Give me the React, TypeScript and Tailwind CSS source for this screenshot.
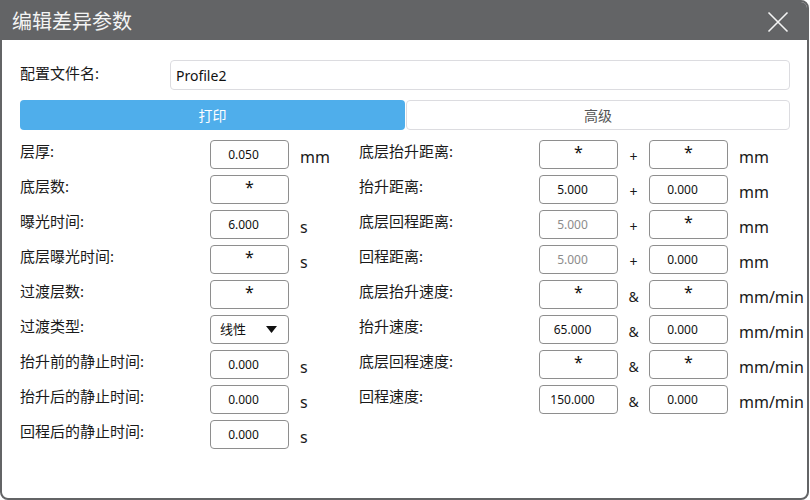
import React from "react";

const font = { fontFamily: '"Noto Sans", "Noto Sans CJK SC", sans-serif' };

type Cell = { v: string; dim?: boolean };

const leftRows: { label: string; cell: Cell | "select"; unit?: string }[] = [
  { label: "层厚:", cell: { v: "0.050" }, unit: "mm" },
  { label: "底层数:", cell: { v: "*" } },
  { label: "曝光时间:", cell: { v: "6.000" }, unit: "s" },
  { label: "底层曝光时间:", cell: { v: "*" }, unit: "s" },
  { label: "过渡层数:", cell: { v: "*" } },
  { label: "过渡类型:", cell: "select" },
  { label: "抬升前的静止时间:", cell: { v: "0.000" }, unit: "s" },
  { label: "抬升后的静止时间:", cell: { v: "0.000" }, unit: "s" },
  { label: "回程后的静止时间:", cell: { v: "0.000" }, unit: "s" },
];

const rightRows: { label: string; a: Cell; op: string; b: Cell; unit: string }[] = [
  { label: "底层抬升距离:", a: { v: "*" }, op: "+", b: { v: "*" }, unit: "mm" },
  { label: "抬升距离:", a: { v: "5.000" }, op: "+", b: { v: "0.000" }, unit: "mm" },
  { label: "底层回程距离:", a: { v: "5.000", dim: true }, op: "+", b: { v: "*" }, unit: "mm" },
  { label: "回程距离:", a: { v: "5.000", dim: true }, op: "+", b: { v: "0.000" }, unit: "mm" },
  { label: "底层抬升速度:", a: { v: "*" }, op: "&", b: { v: "*" }, unit: "mm/min" },
  { label: "抬升速度:", a: { v: "65.000" }, op: "&", b: { v: "0.000" }, unit: "mm/min" },
  { label: "底层回程速度:", a: { v: "*" }, op: "&", b: { v: "*" }, unit: "mm/min" },
  { label: "回程速度:", a: { v: "150.000" }, op: "&", b: { v: "0.000" }, unit: "mm/min" },
];

const Box = ({ cell }: { cell: Cell }) => (
  <div className="w-[79px] h-[29px] shrink-0 rounded-[4px] border border-[#8e8e8e] bg-white flex items-center justify-center">
    {cell.v === "*" ? (
      <span className="text-[16px] text-[#111] mb-[6px]">*</span>
    ) : (
      <span className={`text-[12px] pr-[12px] ${cell.dim ? "text-[#8c8c8c]" : "text-[#111]"}`}>{cell.v}</span>
    )}
  </div>
);

const Label = ({ children, w }: { children: React.ReactNode; w: string }) => (
  <div className={`${w} shrink-0 mb-[6px] text-[15px] text-[#1a1a1a] whitespace-nowrap`}>{children}</div>
);

const Unit = ({ children }: { children?: React.ReactNode }) => (
  <div className="ml-[11px] mt-[5px] text-[16px] text-[#1a1a1a] whitespace-nowrap">{children}</div>
);

export default function App() {
  return (
    <div className="w-[810px] h-[500px] bg-white" style={font}>
      <div className="w-[809px] h-[500px] flex flex-col border-2 border-[#636466] rounded-tr-[8px] rounded-b-[8px] overflow-hidden bg-white">
        <div className="h-[38px] shrink-0 bg-[#636466] flex items-center justify-between pl-[10px] pr-[18px]">
          <span className="text-[20px] text-[#f4f4f4] leading-none mt-[2px]">编辑差异参数</span>
          <svg width="22" height="22" viewBox="0 0 22 22" className="mt-[1px]">
            <path d="M1.5 1.5 L20.5 20.5 M20.5 1.5 L1.5 20.5" stroke="#f4f4f4" strokeWidth="1.6" />
          </svg>
        </div>

        <div className="flex flex-col pl-[18px] pr-[17px] pt-[20px]">
          <div className="flex items-center">
            <div className="w-[150px] shrink-0 mb-[4px] text-[15px] text-[#1a1a1a]">配置文件名:</div>
            <div className="flex-1 h-[30px] rounded-[4px] border border-[#dcdce0] flex items-center pl-[5px] text-[14px] text-[#111]">
              Profile2
            </div>
          </div>

          <div className="flex mt-[10px] h-[30px]">
            <div className="w-[385px] rounded-[4px] bg-[#4faeeb] flex items-center justify-center text-[14px] text-white">
              打印
            </div>
            <div className="flex-1 ml-px rounded-[4px] border border-[#dcdce0] flex items-center justify-center text-[14px] text-[#555]">
              高级
            </div>
          </div>

          <div className="grid grid-cols-[339px_1fr] mt-[10px]">
            <div className="flex flex-col gap-[6px]">
              {leftRows.map((r) => (
                <div key={r.label} className="flex items-center h-[29px]">
                  <Label w="w-[190px]">{r.label}</Label>
                  {r.cell === "select" ? (
                    <div className="w-[79px] h-[29px] shrink-0 rounded-[4px] border border-[#8e8e8e] flex items-center justify-between pl-[9px] pr-[11px]">
                      <span className="text-[13px] text-[#111]">线性</span>
                      <svg width="11" height="7" viewBox="0 0 11 7">
                        <path d="M0 0 H11 L5.5 7 Z" fill="#111" />
                      </svg>
                    </div>
                  ) : (
                    <Box cell={r.cell} />
                  )}
                  <Unit>{r.unit}</Unit>
                </div>
              ))}
            </div>
            <div className="flex flex-col gap-[6px]">
              {rightRows.map((r) => (
                <div key={r.label} className="flex items-center h-[29px]">
                  <Label w="w-[180px]">{r.label}</Label>
                  <Box cell={r.a} />
                  <div className="w-[31px] mt-[4px] text-center text-[14px] text-[#1a1a1a]">{r.op}</div>
                  <Box cell={r.b} />
                  <Unit>{r.unit}</Unit>
                </div>
              ))}
            </div>
          </div>
        </div>
      </div>
    </div>
  );
}
